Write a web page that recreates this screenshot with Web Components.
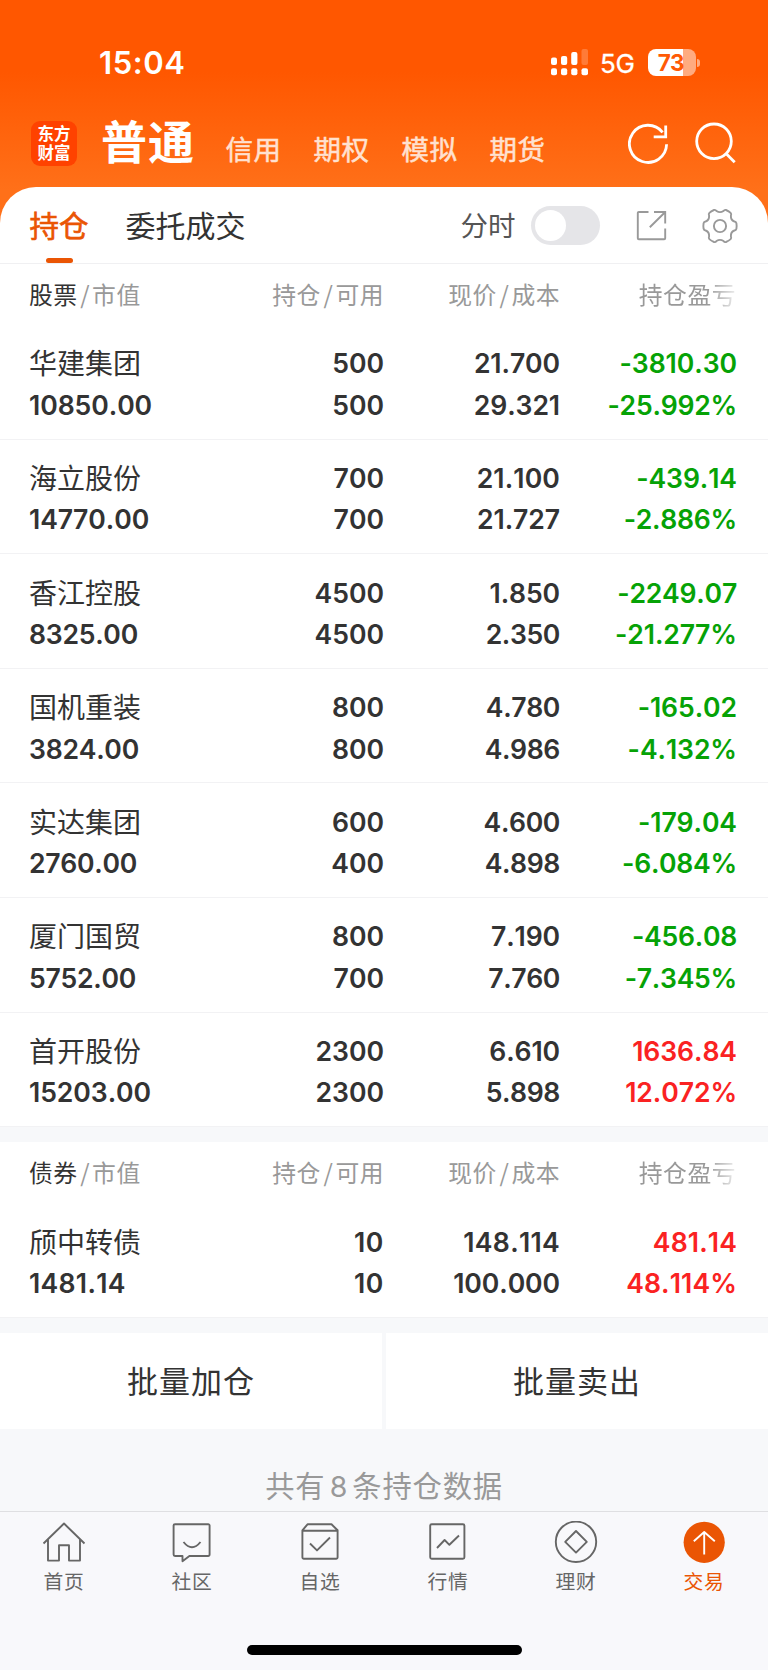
<!DOCTYPE html>
<html lang="zh-CN">
<head>
<meta charset="utf-8">
<title>持仓</title>
<style>
html,body{margin:0;padding:0}
body{width:768px;height:1670px;overflow:hidden;background:#f7f8fa;color:#333;font-family:Inter,"Noto Sans CJK SC",sans-serif;-webkit-font-smoothing:antialiased}
</style>
</head>
<body>
<trade-app></trade-app>
<script>
const define = (name, css, html) => customElements.define(name, class extends HTMLElement {
  constructor() {
    super();
    const t = document.createElement('template');
    t.innerHTML = `<style>*{box-sizing:border-box}svg{display:block;flex:none}${css}</style>` + (typeof html === 'function' ? html(this) : html);
    this.attachShadow({ mode: 'open' }).append(t.content.cloneNode(true));
  }
});

define('status-bar', `
:host{display:flex;height:95px;align-items:flex-start;color:#fff}
.time{margin:43px 0 0 99px;font-size:31px;line-height:40px;font-weight:600;width:120px;letter-spacing:.6px;font-kerning:none}
.sig{margin:49px 0 0 332px}
.net{margin:43.5px 0 0 11px;font-size:26px;line-height:39px;width:36px;white-space:nowrap;letter-spacing:-.3px;-webkit-text-stroke:.3px #fff}
.bat{margin:49px 0 0 12px;width:48px;height:26.5px;border-radius:8px;background:linear-gradient(90deg,#fff 35px,#ffab80 35px);color:#ff5a05;font-weight:700;font-size:22.5px;line-height:27px;text-align:center;letter-spacing:-.3px;padding-right:2px}
.nub{margin:58.5px 0 0 1px;width:3px;height:8px;border-radius:0 4px 4px 0;background:#ffab80}
`, `<div class="time">15:04</div>
<svg class="sig" width="38" height="27" fill="#fff"><rect y="8.5" width="6" height="7.5" rx="2"/><rect x="10" y="7" width="6.2" height="9" rx="2"/><rect x="20.2" y="3" width="6.2" height="13" rx="2"/><rect x="30.5" y="0" width="6.5" height="16" rx="2" opacity=".22"/><rect y="19.3" width="6" height="7" rx="2"/><rect x="10" y="19.3" width="6.2" height="7" rx="2"/><rect x="20.2" y="19.3" width="6.2" height="7" rx="2"/><rect x="30.5" y="19.3" width="6.5" height="7" rx="2"/></svg>
<div class="net">5G</div><div class="bat">73</div><div class="nub"></div>`);

define('account-nav', `
:host{display:flex;height:92px;align-items:flex-start;color:#fff;white-space:nowrap}
.logo{margin:26px 0 0 31px;width:46px;height:45px;border-radius:9px;background:#ff4200;font:700 16.5px/19px "Liberation Sans","Noto Sans CJK SC",sans-serif;text-align:center;padding-top:3.5px;flex:none}
.logo span{display:block;height:19.5px}
.on{margin:14px 0 0 24px;font:700 46px/60px "Noto Sans CJK SC",sans-serif;letter-spacing:1px;width:124.5px}
.t{margin-top:33px;font:400 27.5px/40px "Noto Sans CJK SC",sans-serif;letter-spacing:.5px;width:88px;color:#ffe1d0;-webkit-text-stroke:.5px #ffe1d0}
.r{margin:27px 0 0 50px}.s{margin:27px 0 0 25px}
`, `<div class="logo"><span>东方</span><span>财富</span></div><div class="on">普通</div><div class="t">信用</div><div class="t">期权</div><div class="t">模拟</div><div class="t">期货</div>
<svg class="r" width="42" height="42" fill="none" stroke="#fff" stroke-width="2.8"><path d="M38.6 22.3A18.6 18.6 0 1 1 34.6 10.3"/><path d="M37.7 3.5V14.9H25.7" /></svg>
<svg class="s" width="42" height="42" fill="none" stroke="#fff" stroke-width="2.8"><circle cx="19" cy="19.3" r="17.3"/><path d="M31 31.5 39.7 40.2"/></svg>`);

define('panel-tabs', `
:host{display:flex;height:77px;border-bottom:1px solid #f0f0f2;align-items:flex-start;font-family:"Noto Sans CJK SC",sans-serif;white-space:nowrap}
.a{margin-left:29.5px;width:59px;height:76px;display:flex;flex-direction:column;align-items:center;color:#ea5504;font-size:29.5px;-webkit-text-stroke:.6px #ea5504;line-height:44px;padding-top:14.5px}
.a i{width:27px;height:5px;border-radius:2.5px;background:#ea5504;margin-top:12.5px}
.b{margin:14.5px 0 0 37px;font-size:30px;line-height:44px;width:335px;color:#333}
.c{margin-top:15.5px;font-size:27.5px;line-height:42px;color:#555;width:70px}
.sw{margin-top:19px;width:69px;height:39px;border-radius:20px;background:#e5e5e8;padding:4px}
.sw i{display:block;width:31px;height:31px;border-radius:50%;background:#fff}
.e{margin:23px 0 0 36px}.g{margin:20px 0 0 34px}
`, `<div class="a"><span>持仓</span><i></i></div><div class="b">委托成交</div><div class="c">分时</div><div class="sw"><i></i></div>
<svg class="e" width="31" height="31" fill="none" stroke="#999" stroke-width="1.9"><path d="M12.5 2H2.8a1 1 0 0 0-1 1V28.2a1 1 0 0 0 1 1H28.2a1 1 0 0 0 1-1V18.5M18 2H29.2V13.5M29 2.2 13.8 17.2"/></svg>
<svg class="g" width="38" height="38" fill="none" stroke="#999" stroke-width="1.9" stroke-linejoin="round"><circle cx="19" cy="19" r="6.1"/><path d="M13 3Q14.5 2.5 15.5 4Q19 6.2 22.5 4Q23.5 2.5 25 3Q28 4.2 29.6 5.8Q30.7 7 29.9 8.7Q29.6 13 33.4 14.5Q35 14.7 35.4 16.2Q35.9 19 35.4 21.8Q35 23.3 33.4 23.5Q29.6 25 29.9 29.3Q30.7 31 29.6 32.2Q28 33.8 25 35Q23.5 35.5 22.5 34Q19 31.8 15.5 34Q14.5 35.5 13 35Q10 33.8 8.4 32.2Q7.3 31 8.1 29.3Q8.4 25 4.6 23.5Q3 23.3 2.6 21.8Q2.1 19 2.6 16.2Q3 14.7 4.6 14.5Q8.4 13 8.1 8.7Q7.3 7 8.4 5.8Q10 4.2 13 3Z"/></svg>`);

const COLS = 'display:grid;grid-template-columns:200px 155px 176px 177px;padding-left:29px;white-space:nowrap;';

define('holdings-head', `
:host{${COLS}height:61px;font:400 23.8px/59px "Noto Sans CJK SC",sans-serif;letter-spacing:.5px;color:#999}
b{font-weight:400;color:#333}
div+div{text-align:right}
i{display:inline-block;width:14.5px;text-align:center;font-style:normal;letter-spacing:0}
.f{padding-right:1px;-webkit-mask-image:linear-gradient(90deg,#000 148px,rgba(0,0,0,.15) 177px);mask-image:linear-gradient(90deg,#000 148px,rgba(0,0,0,.15) 177px)}
`, `<div><b><slot></slot></b><i>/</i>市值</div><div>持仓<i>/</i>可用</div><div>现价<i>/</i>成本</div><div class="f">持仓盈亏</div>`);

define('holding-row', `
:host{${COLS}height:114.6px;padding-top:18.4px;grid-template-rows:41.4px 41.4px;border-bottom:1px solid #f2f2f4;font-weight:600;font-size:26.6px;line-height:41.4px;font-kerning:none;font-feature-settings:"calt" 0;--pl:#06a206}
:host([up]){--pl:#fa2222}
div:not(.l){text-align:right}
.n{font-weight:400;font-size:28px;line-height:42.8px}
.p{color:var(--pl)}
`, el => {
  const [name, ...nums] = el.getAttribute('data').split(' ');
  // Tracking that evens out Inter's narrow "1" and wide "."
  const track = s => (((s.match(/1/g) || []).length * 1.3 - (s.includes('.') ? 1.9 : 0)) / s.length).toFixed(2);
  const cell = (i, cls = '') => `<div class="${cls}" style="letter-spacing:${track(nums[i])}px">${nums[i]}</div>`;
  return `<div class="l n">${name}</div>${cell(1)}${cell(3)}${cell(5, 'p')}${cell(0, 'l')}${cell(2)}${cell(4)}${cell(6, 'p')}`;
});

define('holdings-group', `:host{display:block;background:#fff;margin-bottom:15.1px}`, `<slot></slot>`);

define('batch-actions', `
:host{display:grid;grid-template-columns:382px 382px;gap:4px;height:96px;font:400 31px/94px "Noto Sans CJK SC",sans-serif;letter-spacing:1px;text-align:center}
div{background:#fff}
`, `<div>批量加仓</div><div>批量卖出</div>`);

define('total-note', `
:host{display:block;height:82px;padding-top:32px;font:400 29.3px/46px "Noto Sans CJK SC",sans-serif;letter-spacing:.8px;color:#999;text-align:center;overflow:hidden;white-space:nowrap}
span{display:inline-block;width:27px;font-family:Inter,sans-serif;font-size:28.5px;line-height:40px}
`, `共有<span>8</span>条持仓数据`);

const ICONS = {
  home: '<path d="M1.5 22.5 22 2.5 42.5 22.5M6 18.8V39.6H17V24.3H27V39.6H38V18.8"/>',
  chat: '<path d="M5 3.2H38.2a1.4 1.4 0 0 1 1.4 1.4V33.6a1.4 1.4 0 0 1-1.4 1.4H19.4L12.5 40.2V35H5a1.4 1.4 0 0 1-1.4-1.4V4.6A1.4 1.4 0 0 1 5 3.2ZM13.5 21Q22 31.5 30.5 21"/>',
  pick: '<path d="M9.5 3.3H33.5L39.6 9.3V36.2a1.5 1.5 0 0 1-1.5 1.5H5.9a1.5 1.5 0 0 1-1.5-1.5V9.3L9.5 3.3ZM4.6 9.8H39.5M12 22.5 19 29.4 32 16.5"/>',
  chart: '<rect x="4.2" y="3.3" width="34.2" height="34.4" rx="1.5"/><path d="M11 27 18.6 19 23.4 23.8 33 14.5"/>',
  money: '<circle cx="22" cy="20.8" r="20.2"/><path d="M22 10 32.8 20.8 22 31.6 11.2 20.8Z"/>',
  trade: '<circle cx="22.2" cy="21.3" r="20.6" fill="#ea5504" stroke="none"/><path stroke="#fff" d="M22.2 33.6V11.5M11.8 20.2 22.2 11 32.8 20.2"/>'
};
define('tab-item', `
:host{display:flex;flex-direction:column;align-items:center;color:#666;font:400 19.8px/28px "Noto Sans CJK SC",sans-serif;letter-spacing:.8px}
:host([active]){color:#ea5504}
svg{margin-bottom:2px}
`, el => `<svg width="44" height="44" fill="none" stroke="#666" stroke-width="1.9" stroke-linejoin="round">${ICONS[el.getAttribute('icon')]}</svg><slot></slot>`);

define('tab-bar', `
:host{display:flex;flex-direction:column;align-items:center;height:159px;background:#f8f8fb;border-top:1px solid #dfdfe2}
nav{display:grid;grid-template-columns:repeat(6,128px);padding-top:9.2px;height:132.7px}
i{width:275px;height:10px;border-radius:5px;background:#000}
`, `<nav><tab-item icon="home">首页</tab-item><tab-item icon="chat">社区</tab-item><tab-item icon="pick">自选</tab-item><tab-item icon="chart">行情</tab-item><tab-item icon="money">理财</tab-item><tab-item icon="trade" active>交易</tab-item></nav><i></i>`);

define('trade-app', `
:host{display:block;width:768px;height:1670px;background:linear-gradient(#ff5700 0,#ff5700 72px,#ff7019 190px,#ff7019 240px,#f7f8fa 240px)}
.panel{background:#fff;border-radius:36px 36px 0 0}
`, `<status-bar></status-bar><account-nav></account-nav>
<div class="panel"><panel-tabs></panel-tabs>
<holdings-group><holdings-head>股票</holdings-head>
<holding-row data="华建集团 10850.00 500 500 21.700 29.321 -3810.30 -25.992%"></holding-row>
<holding-row data="海立股份 14770.00 700 700 21.100 21.727 -439.14 -2.886%"></holding-row>
<holding-row data="香江控股 8325.00 4500 4500 1.850 2.350 -2249.07 -21.277%"></holding-row>
<holding-row data="国机重装 3824.00 800 800 4.780 4.986 -165.02 -4.132%"></holding-row>
<holding-row data="实达集团 2760.00 600 400 4.600 4.898 -179.04 -6.084%"></holding-row>
<holding-row data="厦门国贸 5752.00 800 700 7.190 7.760 -456.08 -7.345%"></holding-row>
<holding-row up data="首开股份 15203.00 2300 2300 6.610 5.898 1636.84 12.072%"></holding-row></holdings-group></div>
<holdings-group><holdings-head>债券</holdings-head>
<holding-row up data="颀中转债 1481.14 10 10 148.114 100.000 481.14 48.114%"></holding-row></holdings-group>
<batch-actions></batch-actions><total-note></total-note><tab-bar></tab-bar>`);
</script>
</body>
</html>
